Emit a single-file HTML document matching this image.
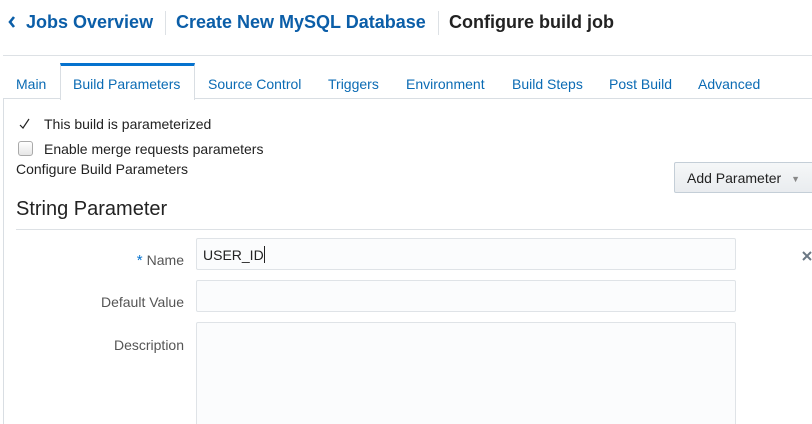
<!DOCTYPE html>
<html><head><meta charset="utf-8"><style>
*{margin:0;padding:0;box-sizing:border-box}
html,body{width:812px;height:424px;overflow:hidden}
body{background:#fff;font-family:"Liberation Sans",sans-serif;position:relative;color:#333}
.a{position:absolute;white-space:nowrap}
.h{font-weight:bold;font-size:18px;top:11px;line-height:22px}
.sep{position:absolute;top:11px;width:1px;height:24px;background:#dde1e5}
.tab{position:absolute;top:76px;font-size:14px;color:#0b6bb4;line-height:17px}
.in{position:absolute;left:196px;width:540px;border:1px solid #dfe3e7;background:#fbfcfd;border-radius:2px}
.lbl{position:absolute;right:628px;font-size:14px;color:#555;line-height:16px}
</style></head><body>
<svg class="a" style="left:7px;top:15px" width="10" height="14" viewBox="0 0 10 14"><path d="M7 2L3 7l4 5" stroke="#0b5ea8" stroke-width="2.6" fill="none"/></svg>
<div class="a h" style="left:26px;color:#0b5ea8">Jobs Overview</div>
<div class="sep" style="left:165px"></div>
<div class="a h" style="left:176px;color:#0b5ea8">Create New MySQL Database</div>
<div class="sep" style="left:438px"></div>
<div class="a h" style="left:449px;color:#222">Configure build job</div>
<div class="a" style="left:3px;top:55px;width:809px;height:1px;background:#dde1e5"></div>
<div class="a" style="left:3px;top:98px;width:809px;height:1px;background:#d9dee3"></div>
<div class="a" style="left:3px;top:98px;width:1px;height:326px;background:#d9dee3"></div>
<div class="a" style="left:60px;top:63px;width:135px;height:37px;background:#fff;border:1px solid #d9dee3;border-bottom:none;border-top:3px solid #0572ce"></div>
<div class="tab" style="left:16px">Main</div>
<div class="tab" style="left:73px">Build Parameters</div>
<div class="tab" style="left:208px">Source Control</div>
<div class="tab" style="left:328px">Triggers</div>
<div class="tab" style="left:406px">Environment</div>
<div class="tab" style="left:512px">Build Steps</div>
<div class="tab" style="left:609px">Post Build</div>
<div class="tab" style="left:698px">Advanced</div>
<svg class="a" style="left:19px;top:118px" width="12" height="12" viewBox="0 0 12 12"><path d="M1 7l3 3L10 1" stroke="#222" stroke-width="1.2" fill="none"/></svg>
<div class="a" style="left:44px;top:116px;font-size:14px;color:#222">This build is parameterized</div>
<div class="a" style="left:18px;top:141px;width:15px;height:15px;border:1px solid #aaa;border-radius:3px;background:linear-gradient(#fff,#e6e6e6)"></div>
<div class="a" style="left:44px;top:141px;font-size:14px;color:#222">Enable merge requests parameters</div>
<div class="a" style="left:16px;top:161px;font-size:14px;color:#222">Configure Build Parameters</div>
<div class="a" style="left:674px;top:162px;width:140px;height:31px;border:1px solid #c4ced7;border-radius:2px;background:linear-gradient(#f5f7f8,#e9ecef);font-size:14px;color:#222;padding:7px 0 0 12px">Add Parameter <span style="color:#888;font-size:9px;margin-left:6px;vertical-align:1px">&#9660;</span></div>
<div class="a" style="left:16px;top:198px;font-size:20px;color:#222">String Parameter</div>
<div class="a" style="left:16px;top:229px;width:796px;height:1px;background:#dde1e5"></div>
<div class="lbl" style="top:252px"><span style="color:#0572ce;font-size:15px;margin-right:4px">*</span>Name</div>
<div class="in" style="top:238px;height:32px;font-size:14px;color:#222;padding:7px 0 0 6px">USER_ID<span style="display:inline-block;width:1px;height:17px;background:#222;vertical-align:-3px"></span></div>
<div class="lbl" style="top:294px">Default Value</div>
<div class="in" style="top:280px;height:32px"></div>
<div class="lbl" style="top:337px">Description</div>
<div class="in" style="top:322px;height:104px"></div>
<svg class="a" style="left:802px;top:251px" width="10" height="10" viewBox="0 0 10 10"><path d="M1 1l8 8M9 1l-8 8" stroke="#6b7884" stroke-width="2"/></svg>
</body></html>
